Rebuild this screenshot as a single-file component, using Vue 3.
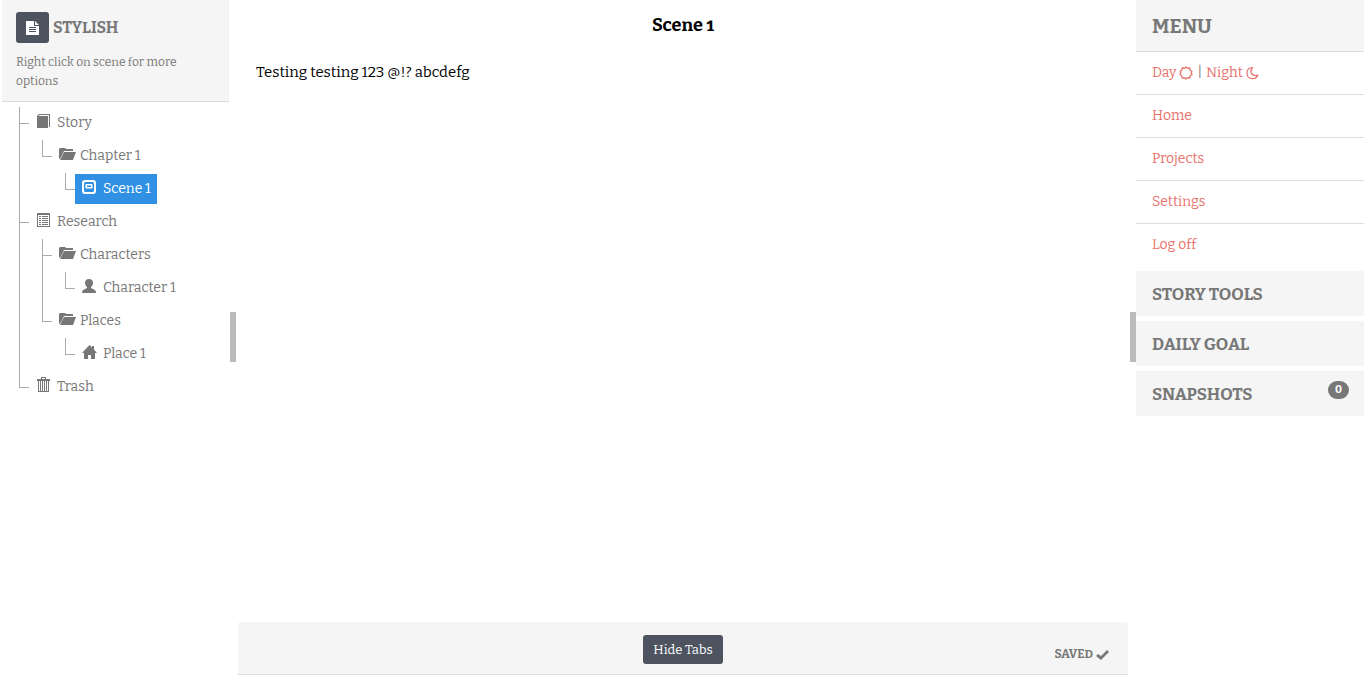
<script setup>
import { ref } from 'vue'

const selected = ref('scene-1')
const tabsVisible = ref(true)
const content = ref('Testing testing 123 @!? abcdefg')
const links = ['Home', 'Projects', 'Settings', 'Log off']
const tools = [
  { name: 'Story tools' },
  { name: 'Daily goal' },
  { name: 'Snapshots', count: 0 },
]

const icons = {
  book: 'M2 3l2-2h11v13h-1V2H4.500L3.500 3H13v12H2z',
  folder: 'M1 13V3l1-1h5l1 1h7v2H6L2.500 12zM2 14l4-8h12l-3 8z',
  scene: 'M4 1h8q3 0 3 3v8q0 3-3 3H4q-3 0-3-3V4q0-3 3-3zM4.500 3Q3 3 3 4.500v7Q3 13 4.500 13h7q1.500 0 1.500-1.500v-7Q13 3 11.500 3zM5 5h6q.5 0 .5.5V9q0 .5-.5.5H5q-.5 0-.5-.5V5.500Q4.500 5 5 5zM6 6.500V8h4V6.500z',
  list: 'M2 1h13v14H2zM3 3v11h11V3zM4 4h2v1H4zM7 4h6v1H7zM4 6h2v1H4zM7 6h6v1H7zM4 8h2v1H4zM7 8h6v1H7zM4 10h2v1H4zM7 10h6v1H7zM4 12h2v1H4zM7 12h6v1H7z',
  person: 'M8 1c3 0 4 2 4 4 0 2-1 3-2 4v1l4 2q1 1 1 3H1q0-2 1-3l4-2V9C5 8 4 7 4 5c0-2 1-4 4-4z',
  house: 'M8.500 1L11 3.500V2h2v3.500L16 9h-2v6h-4v-4H7v4H3V9H1z',
  trash: 'M6 0h5v2h4v2h-1v11H3V4H2V2h4zM7 1v1h3V1zM4 4v10h1V4zM6 4v10h1V4zM8 4v10h1V4zM10 4v10h1V4zM12 4v10h1V4z',
}

const tree = [
  {
    id: 'story', label: 'Story', icon: 'book',
    children: [
      {
        id: 'chapter-1', label: 'Chapter 1', icon: 'folder',
        children: [{ id: 'scene-1', label: 'Scene 1', icon: 'scene' }],
      },
    ],
  },
  {
    id: 'research', label: 'Research', icon: 'list',
    children: [
      {
        id: 'characters', label: 'Characters', icon: 'folder',
        children: [{ id: 'character-1', label: 'Character 1', icon: 'person' }],
      },
      {
        id: 'places', label: 'Places', icon: 'folder',
        children: [{ id: 'place-1', label: 'Place 1', icon: 'house' }],
      },
    ],
  },
  { id: 'trash', label: 'Trash', icon: 'trash', children: [] },
]
</script>

<template>
  <div class="app">
    <aside class="sidebar">
      <header class="project">
        <div class="brand">
          <button class="dark doc" type="button" aria-label="New document">
            <svg width="14" height="16" viewBox="0 0 14 16"><path fill="#fff" fill-rule="evenodd" d="M0 1h8v5h5v9H0zM9 1l4 4H9zM3 7v1h7V7zM3 9v1h7V9zM3 11v1h7v-1z" /></svg>
          </button>
          <h2>STYLISH</h2>
        </div>
        <p>Right click on scene for more options</p>
      </header>
      <ul class="tree">
        <li v-for="root in tree" :key="root.id">
          <button class="node" type="button" :class="{ active: selected === root.id }" @click="selected = root.id">
            <svg class="icon" viewBox="0 0 18 16"><path fill-rule="evenodd" :d="icons[root.icon]" /></svg>{{ root.label }}
          </button>
          <ul v-if="root.children.length">
            <li v-for="group in root.children" :key="group.id">
              <button class="node" type="button" :class="{ active: selected === group.id }" @click="selected = group.id">
                <svg class="icon" viewBox="0 0 18 16"><path fill-rule="evenodd" :d="icons[group.icon]" /></svg>{{ group.label }}
              </button>
              <ul>
                <li v-for="leaf in group.children" :key="leaf.id">
                  <button class="node" type="button" :class="{ active: selected === leaf.id }" @click="selected = leaf.id">
                    <svg class="icon" viewBox="0 0 18 16"><path fill-rule="evenodd" :d="icons[leaf.icon]" /></svg>{{ leaf.label }}
                  </button>
                </li>
              </ul>
            </li>
          </ul>
        </li>
      </ul>
    </aside>

    <div class="splitter"><span></span></div>

    <main>
      <h1>Scene 1</h1>
      <textarea v-model="content" aria-label="Scene text" spellcheck="false"></textarea>
      <footer>
        <button class="dark hide" type="button" @click="tabsVisible = !tabsVisible">Hide Tabs</button>
        <span class="saved">SAVED
          <svg width="13" height="12" viewBox="0 0 13 12"><path fill="#777" d="M0 7l2-2 3 2 6-6 2 2-8 8z" /></svg>
        </span>
      </footer>
    </main>

    <div class="splitter"><span></span></div>

    <aside class="menu">
      <h2 class="menu-title">MENU</h2>
      <nav>
        <div class="item">
          <a href="#day">Day
            <svg width="14" height="14" viewBox="0 0 14 14"><path fill="none" stroke="currentColor" stroke-width="1.300" stroke-linejoin="round" d="M7 1l1.500 1.300 2.300-.3.400 2.300L13 5.500 12.200 7l.8 1.500-1.800 1.200-.4 2.300-2.300-.3L7 13l-1.500-1.300-2.300.3-.4-2.300L1 8.500 1.800 7 1 5.500l1.800-1.200L3.200 2l2.300.3z" /></svg></a>
          <span class="bar">|</span>
          <a href="#night">Night
            <svg width="13" height="14" viewBox="0 0 13 14"><path fill="none" stroke="currentColor" stroke-width="1.200" stroke-linejoin="round" d="M6.500 1.500C3 1.500 1 4 1 7.200 1 10.500 3.300 12.700 6.300 12.700c2.500 0 4.500-1.200 5.500-3.500C8.500 10 6.300 9 5.300 7 4.500 5 5 3 6.500 1.500z" /></svg></a>
        </div>
        <div v-for="link in links" :key="link" class="item"><a href="#">{{ link }}</a></div>
      </nav>
      <div class="tools">
        <button v-for="tool in tools" :key="tool.name" class="tool" type="button">
          <span>{{ tool.name.toUpperCase() }}</span>
          <span v-if="tool.count !== undefined" class="badge">{{ tool.count }}</span>
        </button>
      </div>
    </aside>
  </div>
</template>

<style>
body { background: #fff; }
</style>

<style scoped>
.app {
  display: grid;
  grid-template-columns: 229px 8px 1fr 7px 229px;
  min-height: 100vh;
  box-sizing: border-box;
  font: 14px/20px "Bitter", "DejaVu Serif Condensed", "DejaVu Serif", serif;
  font-variant-ligatures: none;
  color: #777;
}
h1, h2, p, ul { margin: 0; padding: 0; }
ul { list-style: none; }
button { font: inherit; color: inherit; border: 0; background: none; padding: 0; cursor: pointer; }
svg { flex: none; }

.project {
  margin-left: 2px;
  padding: 12px 14px 10px;
  background: #f5f5f5;
  border-bottom: 1px solid #ddd;
}
.brand { display: flex; align-items: center; gap: 4px; }
.brand h2 { font-size: 16px; line-height: 31px; }
.project p { padding-top: 10px; font-size: 12px; line-height: 19px; }
.dark { background: #4e5360; color: #fff; border-radius: 3px; }
.doc { display: flex; align-items: center; justify-content: center; width: 33px; height: 31px; }

.tree { padding: 4px 0 0 19px; }
.tree ul { padding-left: 23px; }
.tree li {
  background:
    linear-gradient(#aaa, #aaa) 0 0 / 1px 100% no-repeat,
    linear-gradient(#aaa, #aaa) 0 17px / 10px 1px no-repeat;
}
.tree li:first-child { background-position: 0 1px, 0 17px; }
.tree li:last-child { background-size: 1px 17px, 10px 1px; }
.node {
  display: flex;
  align-items: center;
  gap: 4px;
  width: max-content;
  height: 33px;
  margin-left: 10px;
  padding: 0 6px;
  border: solid transparent;
  border-width: 2px 0 1px;
  background-clip: padding-box;
}
.node.active { background-color: #3090e4; color: #fff; }
.icon { width: 18px; height: 16px; margin-bottom: 4px; fill: currentColor; }

.splitter { display: flex; align-items: center; justify-content: center; padding-bottom: 2px; }
.splitter span { width: 6px; height: 50px; background: #bbb; }

main { display: flex; flex-direction: column; min-width: 0; padding: 13px 1px 1px; }
h1 {
  font-size: 18px;
  line-height: 24px;
  font-variant-numeric: oldstyle-nums;
  text-align: center;
  color: #000;
}
textarea {
  flex: 1;
  margin-top: 25px;
  padding: 0 18px;
  border: 0;
  outline: 0;
  resize: none;
  background: none;
  font: inherit;
  font-size: 15px;
  color: #000;
}
footer {
  display: grid;
  grid-template-columns: 1fr auto 1fr;
  align-items: center;
  padding: 13px 19px 10px;
  background: #f5f5f5;
  border-bottom: 1px solid #ddd;
  border-radius: 3px 3px 0 0;
}
.hide { grid-column: 2; padding: 5px 10px 4px; font-size: 13px; }
.saved {
  display: flex;
  align-items: center;
  justify-content: flex-end;
  gap: 3px;
  padding-top: 10px;
  font-size: 12px;
  line-height: 19px;
  font-weight: bold;
}

.menu { padding-right: 1px; }
.menu-title {
  padding: 14px 16px 13px;
  background: #f5f5f5;
  font-size: 20px;
  line-height: 24px;
}
.item {
  display: flex;
  align-items: center;
  gap: 4px;
  padding: 11px 16px;
  border-top: 1px solid #ddd;
}
.item a { display: flex; align-items: center; gap: 3px; color: #e8716b; text-decoration: none; }
.tools { display: grid; gap: 5px; padding-top: 5px; }
.tool {
  display: flex;
  align-items: center;
  justify-content: space-between;
  height: 45px;
  padding: 2px 15px 0 16px;
  background: #f5f5f5;
  font-size: 17px;
  font-weight: bold;
}
.badge {
  align-self: flex-start;
  margin-top: 8px;
  padding: 0 7px;
  border-radius: 9px;
  background: #777;
  color: #fff;
  font-size: 11px;
  line-height: 18px;
}
</style>
